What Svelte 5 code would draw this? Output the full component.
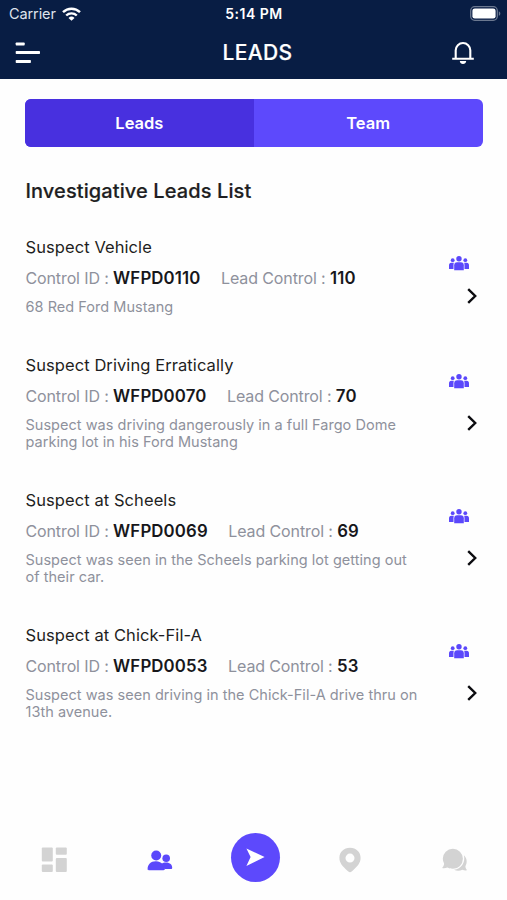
<script>
    let activeTab = $state("Leads");

    const tabs = ["Leads", "Team"];

    const leads = [
        {
            title: "Suspect Vehicle",
            controlId: "WFPD0110",
            leadControl: "110",
            description: "68 Red Ford Mustang",
        },
        {
            title: "Suspect Driving Erratically",
            controlId: "WFPD0070",
            leadControl: "70",
            description:
                "Suspect was driving dangerously in a full Fargo Dome parking lot in his Ford Mustang",
        },
        {
            title: "Suspect at Scheels",
            controlId: "WFPD0069",
            leadControl: "69",
            description:
                "Suspect was seen in the Scheels parking lot getting out of their car.",
        },
        {
            title: "Suspect at Chick-Fil-A",
            controlId: "WFPD0053",
            leadControl: "53",
            description:
                "Suspect was seen driving in the Chick-Fil-A drive thru on 13th avenue.",
        },
    ];
</script>

<div class="page">
    <header class="header">
        <div class="status-bar">
            <div class="carrier">
                <span>Carrier</span>
                <svg width="19" height="14" viewBox="0 0 19 14">
                    <g fill="none" stroke="#fff" stroke-width="2.4">
                        <path d="M1 5.2a12.2 12.2 0 0 1 17 0" />
                        <path d="M4.2 8.5a7.6 7.6 0 0 1 10.6 0" />
                    </g>
                    <path d="M9.5 13.8 6.5 10.9a4.4 4.4 0 0 1 6 0z" fill="#fff" />
                </svg>
            </div>
            <span class="clock">5:14 PM</span>
            <svg class="battery" width="31" height="15" viewBox="0 0 31 15">
                <rect x="0.7" y="0.7" width="26.6" height="13.6" rx="4" fill="none" stroke="#6b7890" stroke-width="1.3" />
                <rect x="2.4" y="2.4" width="23.2" height="10.2" rx="2.4" fill="#fff" />
                <path d="M28.8 5.2c2 .8 2 3.8 0 4.6z" fill="#6b7890" />
            </svg>
        </div>
        <div class="nav-bar">
            <button class="btn-icon" aria-label="Menu">
                <svg width="26" height="24" viewBox="0 0 26 24">
                    <g fill="#fff">
                        <rect x="0.7" y="1.5" width="9" height="2.9" rx="0.7" />
                        <rect x="0.7" y="10" width="24.3" height="2.9" rx="0.7" />
                        <rect x="0.7" y="19" width="15.2" height="2.9" rx="0.7" />
                    </g>
                </svg>
            </button>
            <h1>LEADS</h1>
            <button class="btn-icon bell" aria-label="Notifications">
                <svg width="24" height="24" viewBox="0 0 24 24">
                    <path
                        d="M4.7 17.6V9.3a7.3 7.3 0 0 1 14.6 0v8.3M1.2 17.8h21.6"
                        fill="none"
                        stroke="#fff"
                        stroke-width="2.1"
                    />
                    <path d="M8.8 20.1h6.4c0 4-6.4 4-6.4 0z" fill="#fff" />
                </svg>
            </button>
        </div>
    </header>

    <main class="content">
        <div class="tabs">
            {#each tabs as tab}
                <button
                    class="tab {activeTab === tab ? 'active' : ''}"
                    onclick={() => (activeTab = tab)}
                >
                    {tab}
                </button>
            {/each}
        </div>

        <h2>Investigative Leads List</h2>

        <div class="list">
            {#each leads as lead}
                <div class="lead">
                    <div class="info">
                        <h3>{lead.title}</h3>
                        <div class="meta">
                            <span>Control ID : <b>{lead.controlId}</b></span>
                            <span>Lead Control : <b>{lead.leadControl}</b></span>
                        </div>
                        <p>{lead.description}</p>
                    </div>
                    <div class="side">
                        <svg class="group" width="20" height="15" viewBox="0 0 20 15">
                            <g fill="#5b48fb">
                                <circle cx="10" cy="2.7" r="2.7" />
                                <circle cx="3.7" cy="4.2" r="1.9" />
                                <circle cx="16.3" cy="4.2" r="1.9" />
                                <path d="M5.2 14.2V9.2q0-3 3-3h3.6q3 0 3 3v5z" />
                                <path d="M0 13V9.5q0-2.7 2.4-2.7h2.4Q4.5 8 4.5 9.5V13z" />
                                <path d="M20 13V9.5q0-2.7-2.4-2.7h-2.4q.3 1.2.3 2.7V13z" />
                            </g>
                        </svg>
                        <div class="arrow">
                            <svg width="10" height="16" viewBox="0 0 10 16">
                                <path d="M1.2 1.2 8.2 8l-7 6.8" fill="none" stroke="#0c0c10" stroke-width="2.4" />
                            </svg>
                        </div>
                    </div>
                </div>
            {/each}
        </div>
    </main>

    <nav class="bottom-nav">
        <button class="nav-item" aria-label="Dashboard">
            <svg width="26" height="26" viewBox="0 0 26 26">
                <g fill="#d3d3d3">
                    <rect x="0.8" y="0.5" width="11" height="14" rx="1" />
                    <rect x="0.8" y="17.5" width="11" height="7.5" rx="1" />
                    <rect x="14.8" y="0.5" width="11" height="7.2" rx="1" />
                    <rect x="14.8" y="11" width="11" height="14" rx="1" />
                </g>
            </svg>
        </button>
        <button class="nav-item" aria-label="Leads">
            <svg width="26" height="22" viewBox="0 0 26 22">
                <g fill="#5b48fb">
                    <circle cx="9.2" cy="6.5" r="5" />
                    <circle cx="19.2" cy="9.2" r="3.8" />
                    <path d="M0.6 20.3c0-4.6 3-8 8.2-8 3.3 0 5.6 1.3 7.3 3.3 1 1.2 1.7 2.9 1.7 4.4 0 .8-.5 1.2-1.3 1.2H1.8c-.8 0-1.2-.4-1.2-.9z" />
                    <path d="M14.5 14.7c1.2-.8 2.8-1.3 4.5-1.3 4 0 6.2 2.4 6.2 5.4 0 .9-.4 1.3-1.2 1.3h-6.5z" />
                </g>
            </svg>
        </button>
        <button class="nav-item main" aria-label="Send">
            <svg width="20" height="20" viewBox="0 0 20 20">
                <path d="M1.4 1.6 19.6 10 1.4 19 5.6 10z" fill="#fff" />
            </svg>
        </button>
        <button class="nav-item" aria-label="Map">
            <svg width="22" height="26" viewBox="0 0 22 26">
                <path
                    d="M11 .7C4.8.7.4 5 .4 10.8c0 5.3 3.2 8.6 8.6 13.4 1.5 1.3 2.5 1.3 4 0 5.4-4.8 8.6-8.1 8.6-13.4C21.6 5 17.2.7 11 .7zM11 6.6a4.5 4.5 0 1 1 0 9 4.5 4.5 0 0 1 0-9z"
                    fill="#d3d3d3"
                    fill-rule="evenodd"
                />
            </svg>
        </button>
        <button class="nav-item" aria-label="Messages">
            <svg width="26" height="24" viewBox="0 0 26 24">
                <g fill="#d3d3d3">
                    <path d="M10.8.8A10 10 0 0 1 20.9 10.8 10 10 0 0 1 10.8 20.8c-2.2 0-3.8-.4-5.4-1.2-1.6.6-3.2.8-4.6.6-.6-.2-.4-.8 0-1.2.9-1 1.3-2.2 1.3-3.5A10 10 0 0 1 .8 10.8 10 10 0 0 1 10.8.8z" />
                    <path d="M21.9 7.3c3.2 3.1 3.6 7.3 1.5 11 .1 1.3.4 2.3 1.2 3.3.4.5.2.9-.4 1-1.5.1-2.7-.2-3.8-.8-2.8 1.3-5.8 1.2-8.4-.1 7.2-.4 11.7-7.3 9.9-14.4z" />
                </g>
            </svg>
        </button>
    </nav>
</div>

<style>
    :global(body) {
        background: #fefefe;
    }

    .page {
        height: 900px;
        display: flex;
        flex-direction: column;
        font-family: Inter, "Liberation Sans", sans-serif;
        color: #1e1e22;
    }

    button {
        border: none;
        background: none;
        padding: 0;
        font-family: inherit;
        cursor: pointer;
    }

    svg {
        display: block;
    }

    h1,
    h2,
    h3,
    p {
        margin: 0;
    }

    .header {
        height: 79px;
        background: #081d44;
        color: white;
    }

    .status-bar {
        height: 27px;
        display: grid;
        grid-template-columns: 1fr auto 1fr;
        align-items: center;
        padding: 0 6px 0 9px;
        font-size: 14.5px;
    }

    .carrier {
        display: flex;
        align-items: center;
        gap: 6px;
        color: #dfe3ec;
        letter-spacing: -0.1px;
    }

    .clock {
        font-size: 14px;
        font-weight: 600;
        letter-spacing: 0.5px;
        margin-right: 2px;
    }

    .battery {
        justify-self: end;
    }

    .nav-bar {
        height: 52px;
        display: grid;
        grid-template-columns: 1fr auto 1fr;
        align-items: center;
        padding: 0 32px 0 15px;
        box-sizing: border-box;
    }

    h1 {
        font-size: 21px;
        line-height: 26px;
        font-weight: 500;
        letter-spacing: 0.4px;
        padding-left: 25px;
        -webkit-text-stroke: 0.2px;
    }

    .btn-icon {
        justify-self: start;
    }

    .btn-icon.bell {
        justify-self: end;
    }

    .content {
        flex: 1;
        padding: 19.5px 24.5px 0 25.5px;
    }

    .tabs {
        display: flex;
        height: 48.5px;
        margin-left: -0.5px;
        border-radius: 6px;
        overflow: hidden;
        background: #5d49fc;
    }

    .tab {
        flex: 1;
        color: white;
        font-size: 16.5px;
        font-weight: 600;
    }

    .tab.active {
        background: #4830df;
    }

    h2 {
        margin-top: 31px;
        font-size: 20px;
        line-height: 26px;
        font-weight: 500;
        letter-spacing: 0.1px;
        -webkit-text-stroke: 0.2px;
    }

    .list {
        display: flex;
        flex-direction: column;
        gap: 38px;
        margin-top: 32px;
    }

    .lead {
        display: flex;
        justify-content: space-between;
    }

    .info {
        width: 395px;
    }

    h3 {
        font-size: 16.5px;
        line-height: 22px;
        font-weight: 400;
        letter-spacing: 0.08px;
    }

    .meta {
        display: flex;
        gap: 20.5px;
        margin-top: 10px;
        font-size: 16px;
        line-height: 20px;
        letter-spacing: -0.12px;
        color: #8e919c;
        white-space: nowrap;
    }

    .meta b {
        color: #17171b;
        font-size: 16.8px;
        font-weight: 600;
        letter-spacing: 0.15px;
    }

    p {
        margin-top: 10px;
        margin-bottom: 1px;
        font-size: 14.5px;
        line-height: 17px;
        letter-spacing: 0.03px;
        color: #8e919c;
    }

    .side {
        display: flex;
        flex-direction: column;
        width: 34px;
        padding-top: 19.5px;
    }

    .arrow {
        flex: 1;
        display: flex;
        align-items: center;
        justify-content: flex-end;
        padding: 6px 6px 0 0;
    }

    .bottom-nav {
        display: flex;
        justify-content: space-between;
        align-items: center;
        height: 80px;
        padding: 0 39.5px 0 40.5px;
    }

    .nav-item.main {
        width: 49px;
        height: 49px;
        margin: 0 -20.5px 6px -22.5px;
        border-radius: 50%;
        background: #5d49fc;
        display: flex;
        align-items: center;
        justify-content: center;
    }
</style>
